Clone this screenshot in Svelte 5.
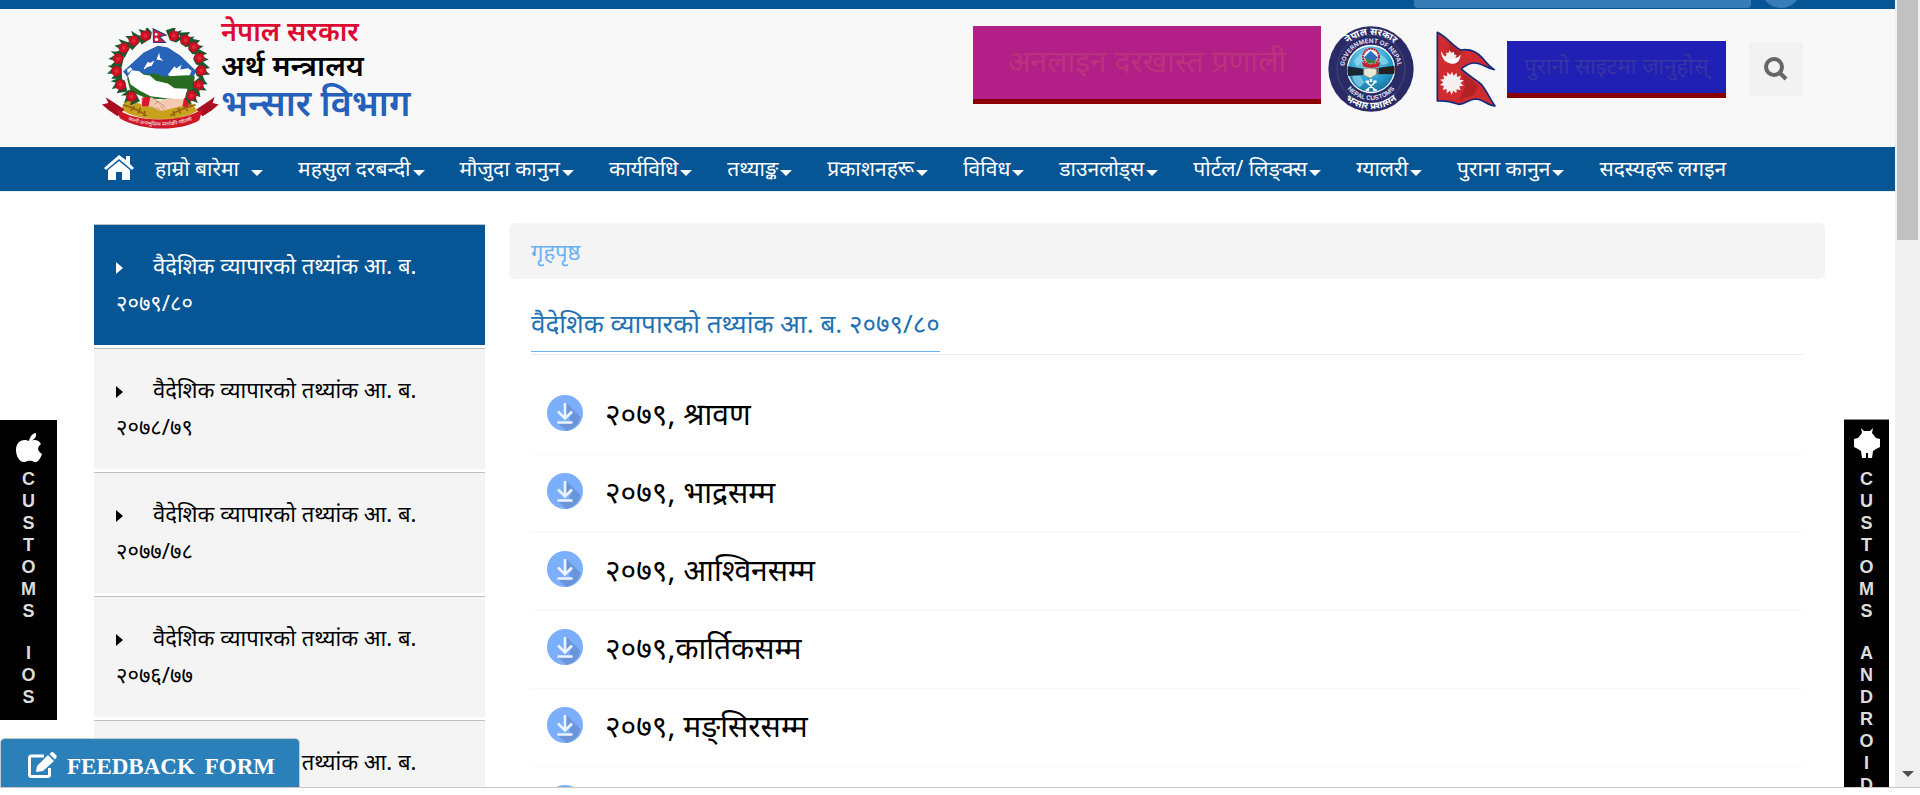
<script>
  const menu = [
    { label: 'हाम्रो बारेमा', caret: true, spaced: true },
    { label: 'महसुल दरबन्दी', caret: true },
    { label: 'मौजुदा कानुन', caret: true },
    { label: 'कार्यविधि', caret: true },
    { label: 'तथ्याङ्क', caret: true },
    { label: 'प्रकाशनहरू', caret: true },
    { label: 'विविध', caret: true },
    { label: 'डाउनलोड्स', caret: true },
    { label: 'पोर्टल/ लिङ्क्स', caret: true },
    { label: 'ग्यालरी', caret: true },
    { label: 'पुराना कानुन', caret: true },
    { label: 'सदस्यहरू लगइन', caret: false }
  ];
  const years = ['२०७९/८०', '२०७८/७९', '२०७७/७८', '२०७६/७७', '२०७५/७६'];
  const files = [
    '२०७९, श्रावण',
    '२०७९, भाद्रसम्म',
    '२०७९, आश्विनसम्म',
    '२०७९,कार्तिकसम्म',
    '२०७९, मङ्सिरसम्म',
    '२०७९, पुससम्म'
  ];
  const flowers = [
    [195, 105, -50], [160, 120, -65], [130, 142, -80], [113, 174, -95],
    [108, 211, -110], [120, 252, -120], [153, 287, -135],
    [280, 105, 50], [315, 118, 65], [340, 139, 80], [356, 172, 95],
    [362, 209, 110], [354, 253, 120], [333, 284, 135]
  ];
  const petals = [0, 60, 120, 180, 240, 300];
</script>

<div class="window">
  <div class="page">
    <div class="strip">
      <input class="strip-search" type="text" aria-label="खोज्नुहोस्" />
      <button class="strip-go" type="button" aria-label="खोज"></button>
    </div>

    <header>
      <a class="brand" href="#home">
        <svg class="emblem" viewBox="65 82 350 302" aria-hidden="true">
          <path d="M128 212L190 155L232 135L262 140L300 165L348 212L330 240L150 240Z" fill="#2863ba" />
          <path d="M190 203l12-20 6 4 14-8-8 16-14 4-8 6zM228 176l8-20 3 16 10 8zM262 222l20-26 5 7 16-11-4 14 24-4 10 8-8 18-40 8zM140 206l10-7 6 6-14 12z" fill="#fff" />
          <path d="M140 232C155 212 172 210 185 216C203 226 220 212 235 222C260 234 310 218 342 226L338 288L268 296L200 293L150 272Z" fill="#286c23" />
          <path d="M143 224L154 208L176 211L190 222L208 224L226 240L262 248L282 262L320 264L318 297L262 293L210 286L176 268L150 250Z" fill="#fff" />
          <path d="M150 298C190 320 285 320 328 298L350 330C290 365 180 365 122 326L132 305Z" fill="#c8a21c" />
          <path d="M128 312q40 10 70 32M345 312q-40 8-76 32M150 330l12-14M172 338l8-18M190 346l4-16M322 330l-12-14M300 338l-8-18M282 346l-4-16" fill="none" stroke="#9a6110" stroke-width="5" />
          <path d="M182 292L214 290L236 300L262 293L310 294L310 314L262 326L240 330L206 316L182 316Z" fill="#f3c9b2" />
          <path d="M214 290l40 28M228 326l-16-10M240 329l-12-10M252 326l-12-10M236 300l-14 10" stroke="#b77963" stroke-width="2" fill="none" />
          <path d="M186 290l24-3-6 30-20-1zM310 292l14-3v30l-18-3z" fill="#d8192b" />
          <g>
            {#each flowers as [x, y, r]}
              <g transform="translate({x} {y}) rotate({r})">
                <path d="M-28 8L-16-22L-6-6L2-29L12-8L24-20L20 8L4 18Z" fill="#18592d" />
                {#each petals as p}
                  <circle cx="0" cy="-9" r="7" fill="#d30f24" stroke="#960d1d" stroke-width="1" transform="rotate({p})" />
                {/each}
                <circle r="6" fill="#e12a3c" />
              </g>
            {/each}
          </g>
          <path d="M218 84L257 103L237 108L255 125H219Z" fill="#cf1b3c" stroke="#253a7b" stroke-width="3" />
          <circle cx="227" cy="101" r="4" fill="#fff" />
          <circle cx="228" cy="116" r="5" fill="#fff" />
          <path d="M65 311L84 306L76 289L103 306L132 326L112 346L85 328Z" fill="#a80f20" />
          <path d="M414 311L396 306L402 288L376 306L347 326L366 346L394 328Z" fill="#a80f20" />
          <path d="M110 324C166 365 298 367 366 324L356 358C300 392 185 392 118 352Z" fill="#cf1527" />
          <path id="motto-line" d="M122 346C180 383 296 384 356 347" fill="none" />
          <text class="motto"><textPath href="#motto-line" startOffset="50%" text-anchor="middle">जननी जन्मभूमिश्च स्वर्गादपि गरीयसी</textPath></text>
        </svg>
        <span class="names">
          <span class="gov">नेपाल सरकार</span>
          <span class="ministry">अर्थ मन्त्रालय</span>
          <span class="dept">भन्सार विभाग</span>
        </span>
      </a>

      <div class="tools">
        <a class="box apply" href="#apply">अनलाइन दरखास्त प्रणाली</a>
        <svg class="seal" viewBox="0 0 260 260" role="img" aria-label="Nepal Customs">
          <defs>
            <radialGradient id="globe" cx=".45" cy=".3" r=".8">
              <stop offset="0" stop-color="#9ee3f3" />
              <stop offset=".55" stop-color="#2ba0cf" />
              <stop offset="1" stop-color="#12618f" />
            </radialGradient>
            <path id="arc-top-out" d="M26 130A104 104 0 0 1 234 130" />
            <path id="arc-top-in" d="M51 150A81 81 0 1 1 209 150" />
            <path id="arc-low-out" d="M9 130A121 121 0 0 0 251 130" />
            <path id="arc-low-in" d="M36 130A94 94 0 0 0 224 130" />
          </defs>
          <circle cx="130" cy="130" r="129" fill="#292b66" />
          <circle cx="130" cy="130" r="103" fill="none" stroke="#53568b" stroke-width="2" />
          <circle cx="130" cy="130" r="71" fill="url(#globe)" stroke="#fff" stroke-width="4" />
          <path d="M78 108q12-22 30-24l-4 20-16 20zM148 84q26 6 36 28l-18 6-16-14zM72 146l24 4 14 20-14 16q-20-12-24-40z" fill="#9adcef" opacity=".65" />
          <circle cx="130" cy="93" r="24" fill="#f1f4f2" stroke="#b51f2d" stroke-width="6" stroke-dasharray="6 2" />
          <path d="M109 95l20-20 22 20-10 11h-21z" fill="#2b6fbd" />
          <path d="M112 98l14 2 10 5 12-2-9 10h-19z" fill="#3c8040" />
          <path d="M103 108q27 18 55 0l-3 14q-25 10-49 0z" fill="#c3202f" />
          <path d="M59 122l49 7v19l-47 3q-4-15-2-29z" fill="#172733" />
          <path d="M201 120l-48 6v20l47-1q3-12 1-25z" fill="#24201f" />
          <path d="M151 127l-8-1v21l9-1z" fill="#df2434" />
          <path d="M108 130l15-3 24 3v16l-19 12-20-10z" fill="#e8e8d5" stroke="#7b8477" stroke-width="2" />
          <path d="M118 171l24 22M142 171l-24 22M121 174h2M137 174h2" stroke="#fff" stroke-width="4" />
          <path d="M114 168h10M137 168h10M114 194h10M137 194h10M130 160v9" stroke="#fff" stroke-width="7" />
          <text class="seal-np"><textPath href="#arc-top-out" startOffset="50%" text-anchor="middle">नेपाल सरकार</textPath></text>
          <text class="seal-en"><textPath href="#arc-top-in" startOffset="50%" text-anchor="middle">GOVERNMENT OF NEPAL</textPath></text>
          <text class="seal-en"><textPath href="#arc-low-in" startOffset="50%" text-anchor="middle">NEPAL CUSTOMS</textPath></text>
          <text class="seal-np"><textPath href="#arc-low-out" startOffset="50%" text-anchor="middle">भन्सार प्रशासन</textPath></text>
        </svg>
        <svg class="flag" viewBox="106 94 180 228" role="img" aria-label="नेपालको झण्डा">
          <path d="M110 98C142 115 157 139 180 151C209 146 229 156 246 176C258 191 268 202 281 210C258 207 244 190 220 190C204 190 194 199 182 207C199 226 225 238 242 254C258 274 268 298 283 319C259 317 249 299 225 298C203 298 194 315 174 314C151 306 137 302 110 304Z" fill="#cf2b30" stroke="#102c80" stroke-width="5" stroke-linejoin="round" />
          <path d="M145 122C157 145 168 151 184 157L171 198L147 164ZM183 218Q207 232 233 260L220 286Q195 293 176 304L194 260Z" fill="#8f1b20" opacity=".45" />
          <path d="M121 153C129 170 139 176 151 174C166 176 176 173 180 163C179 185 167 194 153 192C136 190 122 178 121 153Z" fill="#fff" />
          <path d="M133 172l5-7-3-6 8 1 4-8 5 7 8-3v8l8 3-5 8q-15 10-30-3z" fill="#f4eded" />
          <path d="M154 216l5 12 9-9 1 13 12-4-4 12 13 2-11 8 10 8-13 2 4 12-12-3-1 12-9-8-5 12-5-12-10 8v-13l-12 3 4-12-12-3 10-8-10-8 13-2-4-11 12 3 1-13 9 9z" fill="#f5f0f0" />
        </svg>
        <a class="box old-site" href="#old">पुरानो साइटमा जानुहोस्</a>
        <button class="find" type="button" aria-label="खोज्नुहोस्">
          <svg viewBox="0 0 24 24" aria-hidden="true"><circle cx="10" cy="10" r="8" /><path d="M16 16l6 6" /></svg>
        </button>
      </div>
    </header>

    <nav>
      <a class="home" href="#home" aria-label="गृहपृष्ठ">
        <svg viewBox="0 0 30 25" aria-hidden="true">
          <path d="M15 0L0 13l2 2L15 4l13 11 2-2-4-4V1h-4v4zM15 6L4 15v10h8v-8h6v8h8V15z" fill="#fff" />
        </svg>
      </a>
      {#each menu as item}
        <a class="entry" class:spaced={item.spaced} href="#menu">{item.label}{#if item.caret}<i class="caret"></i>{/if}</a>
      {/each}
    </nav>

    <div class="body">
      <aside>
        {#each years as year, i}
          <a class="year" class:active={i === 0} href="#year"><i class="marker"></i>वैदेशिक व्यापारको तथ्यांक आ. ब. {year}</a>
        {/each}
      </aside>

      <main>
        <div class="crumbs"><a href="#home">गृहपृष्ठ</a></div>
        <section>
          <div class="title"><h1>वैदेशिक व्यापारको तथ्यांक आ. ब. २०७९/८०</h1></div>
          <ul>
            {#each files as file}
              <li>
                <a href="#file">
                  <svg class="down" viewBox="0 0 36 36" aria-hidden="true">
                    <circle cx="18" cy="18" r="18" fill="#7baffc" />
                    <path d="M19.500 8L33.500 22Q31 33 19.500 36L11 28.500H25L22 24L26 18L19.500 20Z" fill="#6a95d9" />
                    <path d="M18 8v14M11 16.500l7 7 7-7M10.500 27.500h15" fill="none" stroke="#eef4ff" stroke-width="2.500" />
                  </svg>
                  {file}
                </a>
              </li>
            {/each}
          </ul>
        </section>
      </main>
    </div>
  </div>

  <div class="scroll" aria-hidden="true"><div class="thumb"></div><i></i></div>

  <a class="app ios" href="#ios" aria-label="Customs iOS">
    <svg viewBox="0 0 26 30" aria-hidden="true">
      <path d="M13 8C14 3 17 0 20 0C21 4 18 7 14 8C19 6 23 7 25 11C21 14 21 18 26 21C24 26 22 30 18 29C14 27 12 28 9 29C3 30 0 22 0 17C0 8 7 5 13 8Z" fill="#fff" />
    </svg>
    <span class="word">{#each 'CUSTOMS' as letter}<b>{letter}</b>{/each}</span>
    <span class="word">{#each 'IOS' as letter}<b>{letter}</b>{/each}</span>
  </a>
  <a class="app android" href="#android" aria-label="Customs Android">
    <svg viewBox="0 0 26 30" aria-hidden="true">
      <path d="M7 0L10 3H16L19 0L18 5L22 10L26 11V19L22 21L19 23L18 30H14V25H12V30H8L7 23L4 21L0 19V11L4 10L8 5Z" fill="#fff" />
    </svg>
    <span class="word">{#each 'CUSTOMS' as letter}<b>{letter}</b>{/each}</span>
    <span class="word">{#each 'ANDROID' as letter}<b>{letter}</b>{/each}</span>
  </a>

  <button class="feedback" type="button">
    <svg viewBox="0 0 29 26" aria-hidden="true">
      <path d="M16 4H3.500Q1.500 4 1.500 6V22.500Q1.500 24.500 3.500 24.500H19.500Q21.500 24.500 21.500 22.500V16" fill="none" stroke="#fff" stroke-width="3" />
      <path d="M8 20L9 14L20 3L26 9L15 19ZM21.500 2L23 .500Q24.500-.500 26 1L28 3Q29.500 4.500 28 6L27 7.500Z" fill="#fff" />
    </svg>
    <span>FEEDBACK</span> <span>FORM</span>
  </button>
</div>

<style>
  :global(body) {
    margin: 0;
    background: #fff;
    font-family: 'Noto Sans', 'Noto Sans Devanagari', sans-serif;
  }
  a {
    color: inherit;
    text-decoration: none;
  }
  button,
  input {
    border: 0;
    padding: 0;
    font: inherit;
  }
  svg {
    flex: none;
  }
  .window {
    position: relative;
    display: flex;
    box-sizing: border-box;
    height: calc(100vh - 7px);
    border-bottom: 1px solid #c8c8c8;
    overflow: hidden;
  }
  .page {
    flex: 1;
    min-width: 0;
  }
  .strip {
    display: flex;
    justify-content: flex-end;
    align-items: flex-end;
    gap: 10px;
    height: 9px;
    box-sizing: border-box;
    padding: 0 94px 1px 0;
    background: #065594;
    overflow: hidden;
  }
  .strip-search {
    flex: none;
    width: 337px;
    height: 34px;
    border-radius: 4px;
    background: #377cb6;
  }
  .strip-go {
    flex: none;
    width: 40px;
    height: 40px;
    border-radius: 50%;
    background: #377cb6;
  }
  header {
    display: flex;
    justify-content: space-between;
    box-sizing: border-box;
    height: 138px;
    padding: 0 92px 0 102px;
    background: #f8f8f8;
  }
  .brand {
    display: flex;
    gap: 2px;
  }
  .emblem {
    width: 117px;
    height: 101px;
    margin-top: 19px;
  }
  .motto {
    font-size: 15px;
    fill: #fff;
  }
  .names {
    display: flex;
    flex-direction: column;
    padding-top: 5px;
    font-weight: 600;
    white-space: nowrap;
  }
  .gov {
    font-size: 27px;
    line-height: 34px;
    color: #dc0a32;
  }
  .ministry {
    font-size: 29px;
    line-height: 34px;
    color: #000;
  }
  .dept {
    font-size: 36px;
    line-height: 42px;
    color: #2560ba;
  }
  .tools {
    display: flex;
    align-items: center;
    height: 120px;
  }
  .box {
    display: flex;
    align-items: center;
    justify-content: center;
    box-sizing: border-box;
    border-bottom: 5px solid #8b0000;
    white-space: nowrap;
  }
  .apply {
    width: 348px;
    height: 78px;
    margin-bottom: 8px;
    padding-bottom: 4px;
    background: #b22087;
    color: #ba337c;
    font-size: 30px;
  }
  .seal {
    width: 86px;
    height: 86px;
    margin-left: 7px;
  }
  .seal-np {
    font-size: 29px;
    font-weight: 700;
    fill: #fff;
  }
  .seal-en {
    font: 700 19px Inter, sans-serif;
    fill: #dcddea;
  }
  .flag {
    width: 60px;
    height: 76px;
    margin-left: 22px;
  }
  .old-site {
    width: 219px;
    height: 57px;
    margin-left: 11px;
    padding-bottom: 4px;
    background: #2120b4;
    color: #3734a4;
    font-size: 22px;
  }
  .find {
    display: grid;
    place-items: center;
    width: 54px;
    height: 54px;
    margin-left: 23px;
    border-radius: 3px;
    background: #f2f2f2;
  }
  .find svg {
    width: 24px;
    height: 24px;
    fill: none;
    stroke: #666;
    stroke-width: 4;
  }
  nav {
    display: flex;
    align-items: center;
    box-sizing: border-box;
    height: 45px;
    padding: 0 0 3px 104px;
    gap: 35px;
    background: #065594;
    border-bottom: 1px solid #efefef;
    color: #fff;
    font-size: 21px;
    white-space: nowrap;
  }
  .home {
    margin-right: -14px;
    line-height: 0;
  }
  .home svg {
    width: 30px;
    height: 25px;
  }
  .entry {
    display: flex;
    align-items: center;
    gap: 2px;
  }
  .spaced {
    gap: 12px;
  }
  .caret {
    margin-top: 11px;
    border: 6px solid transparent;
    border-top-color: #fff;
    border-bottom: 0;
  }
  .body {
    display: grid;
    grid-template-columns: 391px minmax(0, 1fr);
    gap: 24px;
    padding: 31px 70px 0 94px;
  }
  aside {
    padding-top: 1px;
  }
  .year {
    display: block;
    margin-bottom: 3px;
    border-top: 1px solid #c0c0c0;
    padding: 22px 50px 24px 22px;
    background: #f4f4f4;
    color: #000;
    font-size: 22px;
    line-height: 37px;
  }
  .active {
    background: #065594;
    color: #fff;
  }
  .marker {
    display: inline-block;
    margin-right: 30px;
    border: 6px solid transparent;
    border-left: 7px solid currentColor;
    border-right: 0;
  }
  .crumbs {
    border-radius: 6px;
    padding: 0 22px;
    background: #f4f4f4;
    color: #68b2f2;
    font-size: 22px;
    line-height: 56px;
  }
  section {
    padding: 17px 22px 0;
  }
  .title {
    border-bottom: 1px solid #ebebeb;
    padding-bottom: 2px;
  }
  h1 {
    display: inline-block;
    margin: 0;
    border-bottom: 1px solid #68b2f2;
    color: #2272b3;
    font-size: 26px;
    font-weight: 400;
    line-height: 55px;
    vertical-align: top;
  }
  ul {
    margin: 0;
    padding: 22px 0 0;
    list-style: none;
  }
  li {
    border-bottom: 1px solid #f7f7f7;
    padding-left: 16px;
  }
  li a {
    display: flex;
    align-items: center;
    gap: 22px;
    box-sizing: border-box;
    height: 77px;
    padding-bottom: 5px;
    color: #000;
    font-size: 30px;
  }
  .down {
    width: 36px;
    height: 36px;
  }
  .scroll {
    position: relative;
    display: flex;
    flex-direction: column;
    justify-content: space-between;
    align-items: center;
    width: 25px;
    background: #f0f0f0;
  }
  .thumb {
    width: 21px;
    height: 240px;
    background: #c1c1c1;
  }
  .scroll i {
    margin-bottom: 10px;
    border: 6px solid transparent;
    border-top-color: #505050;
    border-bottom: 0;
  }
  .app {
    position: absolute;
    top: 420px;
    display: flex;
    flex-direction: column;
    align-items: center;
    box-sizing: border-box;
    background: #000;
    color: #dcdcdc;
    font-family: 'Liberation Sans', sans-serif;
    font-size: 18px;
    line-height: 22px;
  }
  .app svg {
    width: 26px;
    height: 30px;
  }
  .word {
    display: flex;
    flex-direction: column;
    align-items: center;
    margin-bottom: 20px;
  }
  .ios {
    left: 0;
    width: 57px;
    height: 300px;
    padding-top: 13px;
  }
  .ios svg {
    margin-bottom: 5px;
  }
  .android {
    top: 419px;
    right: 31px;
    width: 45px;
    border-top: 1px solid #888;
    padding-top: 8px;
  }
  .android svg {
    margin-bottom: 10px;
  }
  .feedback {
    position: absolute;
    left: 0;
    bottom: 0;
    display: flex;
    align-items: center;
    gap: 10px;
    width: 300px;
    height: 49px;
    box-sizing: border-box;
    border: 1px solid #c4c9cc;
    border-bottom: 0;
    border-radius: 5px 5px 0 0;
    padding: 8px 0 0 27px;
    background: #2c80b9;
    color: #fff;
    font: 700 23px 'Liberation Serif', serif;
  }
  .feedback svg {
    width: 29px;
    height: 26px;
    margin-bottom: 4px;
  }
</style>
